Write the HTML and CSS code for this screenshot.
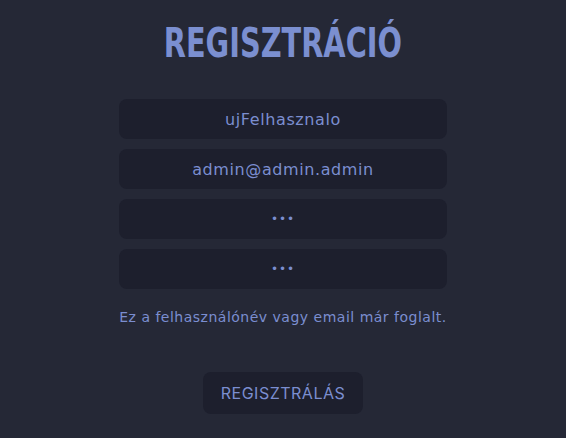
FILE: index.html
```html
<!DOCTYPE html>
<html lang="hu">
<head>
<meta charset="utf-8">
<title>Regisztráció</title>
<link rel="stylesheet" href="styles.css">
</head>
<body>
<main class="page">
  <h1 class="title">REGISZTRÁCIÓ</h1>
  <form class="form">
    <div class="field">ujFelhasznalo</div>
    <div class="field">admin@admin.admin</div>
    <div class="field dots">•••</div>
    <div class="field dots">•••</div>
    <p class="error">Ez a felhasználónév vagy email már foglalt.</p>
    <button type="button" class="btn">REGISZTRÁLÁS</button>
  </form>
</main>
</body>
</html>
```
FILE: styles.css
```css
html, body {
  margin: 0;
  padding: 0;
  height: 100%;
}
body {
  background: #252836;
  font-family: "DejaVu Sans", sans-serif;
  color: #7b8ed0;
}
.page {
  display: flex;
  flex-direction: column;
  align-items: center;
  padding-top: 19px;
}
.title {
  margin: 0;
  font-family: "DejaVu Sans Condensed", "DejaVu Sans", sans-serif;
  font-stretch: condensed;
  font-weight: 700;
  font-size: 40px;
  line-height: 48px;
  color: #7b8fd0;
  transform: scaleX(0.8);
}
.form {
  margin-top: 32px;
  width: 328px;
  display: flex;
  flex-direction: column;
  align-items: center;
  gap: 10px;
}
.field {
  width: 100%;
  height: 40px;
  box-sizing: border-box;
  background: #1d1f2d;
  border-radius: 8px;
  display: flex;
  align-items: center;
  justify-content: center;
  font-size: 16px;
  letter-spacing: 0.6px;
  color: #7b8ed0;
}
.dots {
  font-size: 12px;
  letter-spacing: 1px;
}
.error {
  margin: 8px 0 0;
  font-size: 14px;
  line-height: 20px;
  letter-spacing: 0.5px;
  white-space: nowrap;
  text-align: center;
  color: #7b8ed0;
}
.btn {
  margin-top: 35px;
  width: 160px;
  height: 42px;
  border: none;
  border-radius: 8px;
  background: #1d1f2d;
  color: #7b8ed0;
  font-family: Inter, "Noto Sans", sans-serif;
  font-size: 16px;
  letter-spacing: 0.5px;
}
```
